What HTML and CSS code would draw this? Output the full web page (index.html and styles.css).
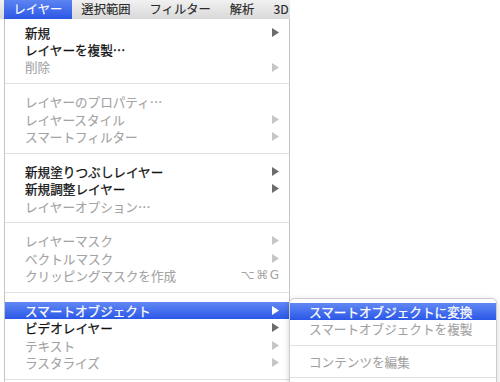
FILE: index.html
```html
<!DOCTYPE html>
<html lang="ja">
<head>
<meta charset="utf-8">
<title>レイヤー メニュー</title>
<link rel="stylesheet" href="styles.css">
</head>
<body>
<div class="screen">
  <div class="menubar">
    <span class="mb-item active">レイヤー</span>
    <span class="mb-item">選択範囲</span>
    <span class="mb-item">フィルター</span>
    <span class="mb-item">解析</span>
    <span class="mb-item">3D</span>
  </div>
  <div class="menu">
    <div class="row"><span class="label">新規</span><svg class="arrow" width="7" height="9" viewBox="0 0 7 9"><polygon points="0,0 7,4.5 0,9"/></svg></div>
    <div class="row"><span class="label">レイヤーを複製…</span></div>
    <div class="row disabled"><span class="label">削除</span><svg class="arrow" width="7" height="9" viewBox="0 0 7 9"><polygon points="0,0 7,4.5 0,9"/></svg></div>
    <div class="sep"></div>
    <div class="row disabled"><span class="label">レイヤーのプロパティ…</span></div>
    <div class="row disabled"><span class="label">レイヤースタイル</span><svg class="arrow" width="7" height="9" viewBox="0 0 7 9"><polygon points="0,0 7,4.5 0,9"/></svg></div>
    <div class="row disabled"><span class="label">スマートフィルター</span><svg class="arrow" width="7" height="9" viewBox="0 0 7 9"><polygon points="0,0 7,4.5 0,9"/></svg></div>
    <div class="sep"></div>
    <div class="row"><span class="label">新規塗りつぶしレイヤー</span><svg class="arrow" width="7" height="9" viewBox="0 0 7 9"><polygon points="0,0 7,4.5 0,9"/></svg></div>
    <div class="row"><span class="label">新規調整レイヤー</span><svg class="arrow" width="7" height="9" viewBox="0 0 7 9"><polygon points="0,0 7,4.5 0,9"/></svg></div>
    <div class="row disabled"><span class="label">レイヤーオプション…</span></div>
    <div class="sep"></div>
    <div class="row disabled"><span class="label">レイヤーマスク</span><svg class="arrow" width="7" height="9" viewBox="0 0 7 9"><polygon points="0,0 7,4.5 0,9"/></svg></div>
    <div class="row disabled"><span class="label">ベクトルマスク</span><svg class="arrow" width="7" height="9" viewBox="0 0 7 9"><polygon points="0,0 7,4.5 0,9"/></svg></div>
    <div class="row disabled"><span class="label">クリッピングマスクを作成</span><span class="shortcut">⌥⌘G</span></div>
    <div class="sep"></div>
    <div class="row selected"><span class="label">スマートオブジェクト</span><svg class="arrow" width="7" height="9" viewBox="0 0 7 9"><polygon points="0,0 7,4.5 0,9"/></svg></div>
    <div class="row"><span class="label">ビデオレイヤー</span><svg class="arrow" width="7" height="9" viewBox="0 0 7 9"><polygon points="0,0 7,4.5 0,9"/></svg></div>
    <div class="row disabled"><span class="label">テキスト</span><svg class="arrow" width="7" height="9" viewBox="0 0 7 9"><polygon points="0,0 7,4.5 0,9"/></svg></div>
    <div class="row disabled"><span class="label">ラスタライズ</span><svg class="arrow" width="7" height="9" viewBox="0 0 7 9"><polygon points="0,0 7,4.5 0,9"/></svg></div>
    <div class="sep"></div>
  </div>
  <div class="submenu">
    <div class="row selected"><span class="label">スマートオブジェクトに変換</span></div>
    <div class="row disabled"><span class="label">スマートオブジェクトを複製</span></div>
    <div class="sep small"></div>
    <div class="row disabled"><span class="label">コンテンツを編集</span></div>
    <div class="sep small"></div>
  </div>
</div>
</body>
</html>
```

FILE: styles.css
```css
html, body {
  margin: 0;
  padding: 0;
  background: #ffffff;
}

.screen {
  position: relative;
  width: 500px;
  height: 382px;
  overflow: hidden;
  font-family: "Noto Sans CJK JP", "Hiragino Kaku Gothic Pro", sans-serif;
  color: #111111;
}

.menubar {
  display: flex;
  width: 290px;
  height: 19px;
  padding-left: 4px;
  box-sizing: border-box;
  background: linear-gradient(#f1f1f1, #d9d9d9);
  font-size: 12.3px;
  line-height: 19px;
  color: #2a2a2a;
}

.mb-item {
  padding: 0 9.5px;
  white-space: nowrap;
  -webkit-text-stroke: 0.15px currentColor;
}

.mb-item.active {
  color: #ffffff;
  background: linear-gradient(#5d84f2, #2b58e6);
}

.menu {
  width: 286px;
  margin-left: 4px;
  box-sizing: border-box;
  border-left: 1px solid #c4c4c4;
  border-right: 1px solid #c4c4c4;
  padding-top: 4.6px;
  background: #ffffff;
}

.row {
  display: flex;
  align-items: center;
  height: 17.4px;
  padding: 0 10px 0 20px;
  font-size: 12.6px;
  line-height: 17.4px;
  white-space: nowrap;
}

.label {
  flex: 1;
  -webkit-text-stroke: 0.25px currentColor;
}

.arrow {
  display: block;
  fill: #6c6c6c;
}

.row.disabled {
  color: #a3a3a3;
}

.row.disabled .label {
  -webkit-text-stroke: 0.1px currentColor;
}

.row.disabled .arrow {
  fill: #c6c6c6;
}

.row.selected {
  color: #ffffff;
  background: linear-gradient(#6288f4, #2a57e7);
}

.row.selected .arrow {
  fill: #ffffff;
}

.shortcut {
  font-family: "DejaVu Sans", sans-serif;
  font-size: 12px;
  letter-spacing: 1.5px;
  margin-right: -1.5px;
}

.sep {
  height: 17.4px;
  display: flex;
  align-items: center;
}

.sep::after {
  content: "";
  display: block;
  width: 100%;
  height: 1px;
  margin-top: -2px;
  background: #e1e1e1;
}

.submenu {
  position: absolute;
  left: 289px;
  top: 298px;
  width: 208px;
  height: 100px;
  box-sizing: border-box;
  padding-top: 4px;
  background: #ffffff;
  border: 1px solid #cdcdcd;
  border-radius: 5px 5px 0 0;
  box-shadow: 0 2px 6px rgba(0, 0, 0, 0.18);
}

.submenu .row {
  padding-left: 19px;
}

.sep.small {
  height: 15px;
}

.sep.small::after {
  margin-top: 0;
}
```
